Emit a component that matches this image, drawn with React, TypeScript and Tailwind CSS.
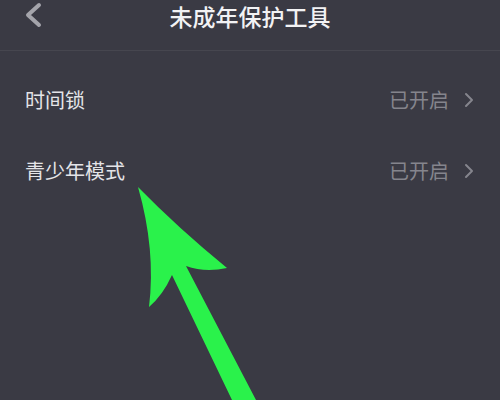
import React from "react";

const Row = ({ label }: { label: string }) => (
  <div className="flex items-center justify-between h-[71px] pl-[25px] pr-[26px]">
    <span className="text-[20px] leading-none text-[#e4e4e8]">{label}</span>
    <div className="flex items-center">
      <span className="text-[20px] leading-none text-[#85858d]">已开启</span>
      <svg width="10" height="16" viewBox="0 0 10 16" className="ml-[15px]">
        <path d="M2 2 L8 8 L2 14" fill="none" stroke="#85858d" strokeWidth="2" strokeLinecap="round" strokeLinejoin="round" />
      </svg>
    </div>
  </div>
);

export default function App() {
  return (
    <div
      className="relative w-[500px] h-[400px] overflow-hidden bg-[#3a3a44]"
      style={{ fontFamily: '"Noto Sans CJK SC", "Noto Sans", sans-serif' }}
    >
      <div className="relative flex items-center justify-center h-[51px] border-b border-[#46464f]">
        <svg width="18" height="26" viewBox="0 0 18 26" className="absolute left-[24px] top-[2px]">
          <path d="M15 3 L4 13 L15 23" fill="none" stroke="#a4a4ab" strokeWidth="4" strokeLinecap="round" strokeLinejoin="round" />
        </svg>
        <span className="text-[23px] leading-none font-medium text-[#f2f2f4] -mt-[18px]">未成年保护工具</span>
      </div>
      <div className="pt-[13px]">
        <Row label="时间锁" />
        <Row label="青少年模式" />
      </div>
      <svg width="500" height="400" viewBox="0 0 500 400" className="absolute left-0 top-0 pointer-events-none">
        <path
          d="M138 187 Q178 228 227 268 Q205 273 186 266 L256 400 L232 400 L172 275 Q163 295 149 307 Q156 250 138 187 Z"
          fill="#2af24b"
        />
      </svg>
    </div>
  );
}
